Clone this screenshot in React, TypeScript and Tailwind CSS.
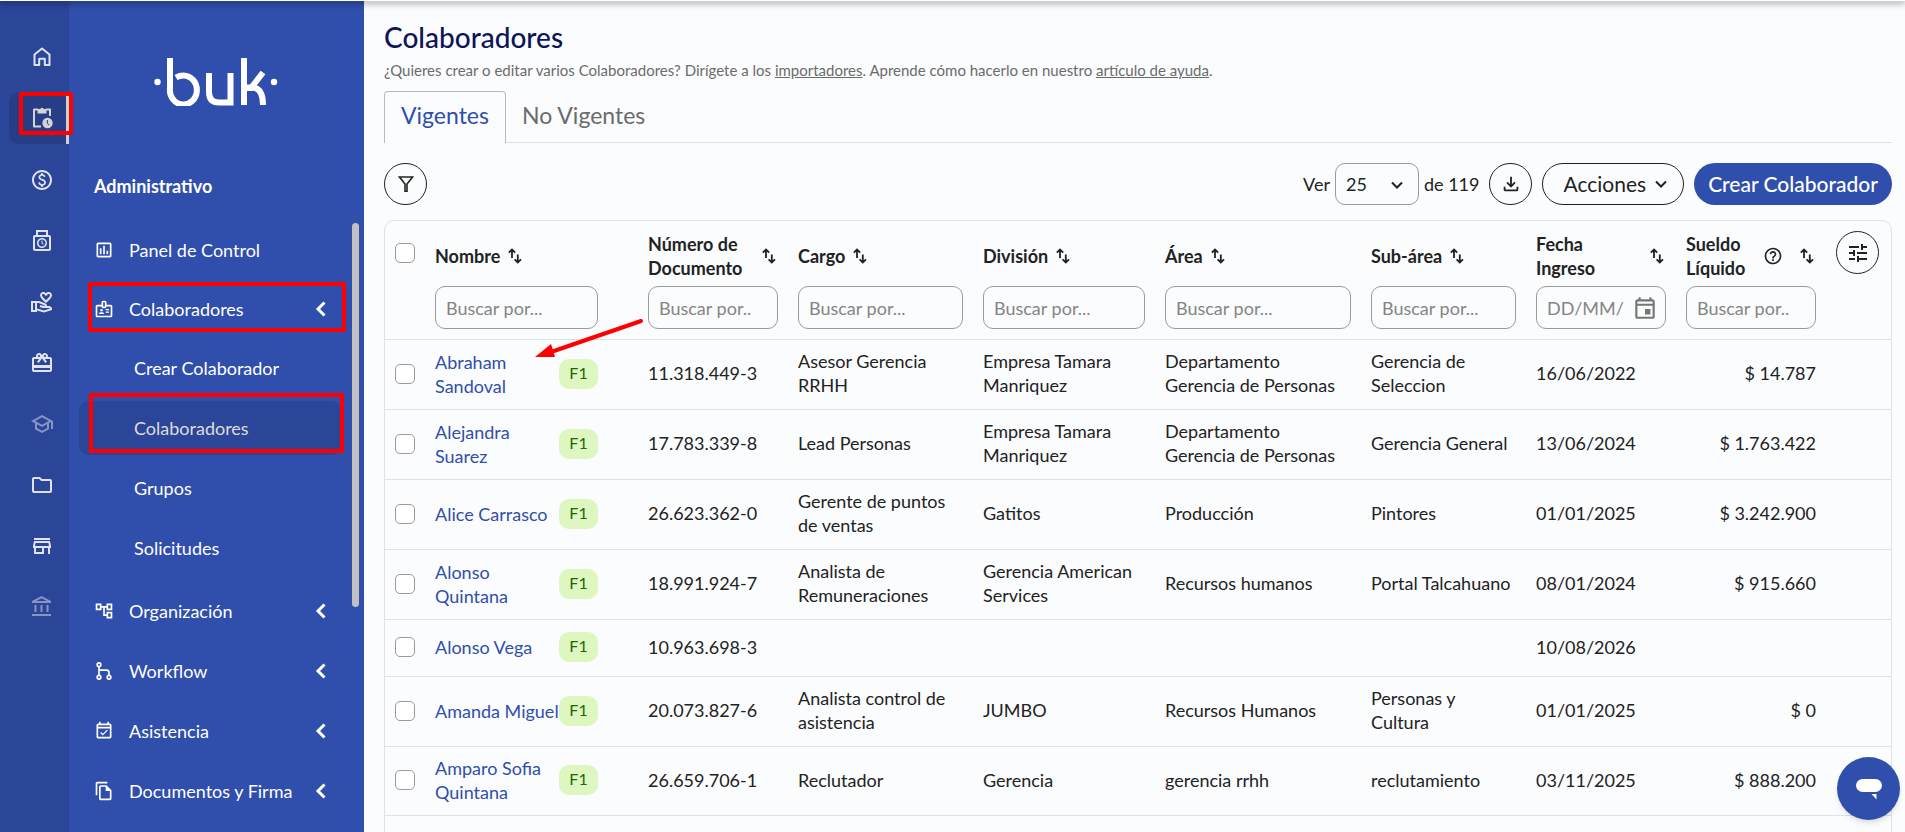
import type { ReactNode } from 'react';
import {
  MdOutlinePaid, MdOutlinePunchClock, MdOutlineVolunteerActivism, MdOutlineCardGiftcard,
  MdOutlineSchool, MdOutlineFolder, MdOutlineStore, MdOutlineAccountBalance, MdOutlineInsertChart,
  MdOutlineBadge, MdOutlineAccountTree, MdOutlineEventAvailable, MdOutlineFileCopy, MdOutlineEvent,
  MdOutlineFileDownload, MdOutlineHelpOutline, MdTune,
} from 'react-icons/md';

function HomeIcon({ className }: { className?: string }) {
  return (
    <svg viewBox="0 0 24 24" fill="none" stroke="currentColor" strokeWidth="2" strokeLinejoin="round" className={className}>
      <path d="M4.500 9.500 12 3.500l7.500 6v10.500h-4.700v-6.200H9.200V20H4.500z" />
    </svg>
  );
}

function PendingIcon({ className }: { className?: string }) {
  return (
    <svg viewBox="0 0 24 24" fill="none" stroke="currentColor" strokeWidth="2" strokeLinejoin="round" className={className}>
      <path d="M11 20.500H4v-17h4M16 3.500h4V10" />
      <path d="M7.500 3h2.800a1.800 1.800 0 0 1 3.400 0h2.800v4.500h-9z" fill="currentColor" stroke="none" />
      <circle cx="17.500" cy="17" r="5.200" fill="currentColor" stroke="none" />
      <path d="M17.300 14v3.200l1.900 1.900" stroke="#273d86" strokeWidth="1" />
    </svg>
  );
}

function MergeIcon({ className }: { className?: string }) {
  return (
    <svg viewBox="0 0 24 24" fill="none" stroke="currentColor" strokeWidth="2" className={className}>
      <circle cx="6" cy="4.500" r="2.200" />
      <circle cx="6" cy="19.500" r="2.200" />
      <circle cx="18" cy="19.500" r="2.200" />
      <path d="M6 7v10M6 11h9a3 3 0 0 1 3 3v3" />
    </svg>
  );
}

function SortIcon() {
  return (
    <svg viewBox="0 0 14 16" fill="none" stroke="currentColor" strokeWidth="1.800" className="h-4 w-[14px] shrink-0">
      <path d="M4 10V1.500M.8 4.700 4 1.500l3.200 3.200M9.800 6.500v8M6.600 11.300l3.200 3.200 3.200-3.200" />
    </svg>
  );
}

function FilterIcon() {
  return (
    <svg viewBox="0 0 16 16" fill="none" stroke="currentColor" strokeWidth="1.600" className="h-4 w-4">
      <path d="M1.500 1h13L9 8v7.500H7V8z" />
    </svg>
  );
}

function Chevron({ dir, className }: { dir: 'left' | 'down'; className?: string }) {
  return (
    <svg viewBox="0 0 12 16" fill="none" stroke="currentColor" className={className} strokeWidth={dir === 'left' ? 3 : 2}>
      <path d={dir === 'left' ? 'M9.500 1.500 3 8l6.500 6.500' : 'M1 5.500 6 10.500l5-5'} />
    </svg>
  );
}

function Logo() {
  return (
    <svg viewBox="0 0 124 48" className="h-12 w-[124px]" role="img" aria-label="buk" fill="none" stroke="white" strokeWidth="6">
      <circle cx="3.500" cy="24" r="3.200" fill="white" stroke="none" />
      <path d="M16 0v30a13.500 14.500 0 1 0 13.500-12.500q-4 0-7.500 2" />
      <path d="M55 15v19q0 10.500 10 10.500h11.500V15" />
      <path d="M90 0v47M92 30h5l12-15.500M92 29.500h7q10 1 10 17.500" />
      <circle cx="120" cy="24" r="3.200" fill="white" stroke="none" />
    </svg>
  );
}

const rail = [
  { label: 'Inicio',         icon: HomeIcon },
  { label: 'Administrativo', icon: PendingIcon, active: true },
  { label: 'Remuneraciones', icon: MdOutlinePaid },
  { label: 'Control',        icon: MdOutlinePunchClock },
  { label: 'Bienestar',      icon: MdOutlineVolunteerActivism },
  { label: 'Beneficios',     icon: MdOutlineCardGiftcard },
  { label: 'Capacitaciones', icon: MdOutlineSchool, dim: true },
  { label: 'Archivos',       icon: MdOutlineFolder },
  { label: 'Tienda',         icon: MdOutlineStore },
  { label: 'Finanzas',       icon: MdOutlineAccountBalance, dim: true },
];

const menuBottom = [
  { label: 'Organización',       icon: MdOutlineAccountTree },
  { label: 'Workflow',           icon: MergeIcon },
  { label: 'Asistencia',         icon: MdOutlineEventAvailable },
  { label: 'Documentos y Firma', icon: MdOutlineFileCopy },
];

const submenu = ['Crear Colaborador', 'Colaboradores', 'Grupos', 'Solicitudes'];

const columns = [
  { title: 'Nombre',              width: 'w-[213px]', pad: 'pr-[30px]' },
  { title: 'Número de Documento', width: 'w-[150px]', placeholder: 'Buscar por..', spread: true },
  { title: 'Cargo',               width: 'w-[185px]' },
  { title: 'División',            width: 'w-[182px]' },
  { title: 'Área',                width: 'w-[206px]' },
  { title: 'Sub-área',            width: 'w-[165px]' },
  { title: 'Fecha Ingreso',       width: 'w-[150px]', placeholder: 'DD/MM/', spread: true, date: true },
  { title: 'Sueldo Líquido',      width: 'w-[150px]', placeholder: 'Buscar por..', spread: true, help: true },
];

const rows = [
  { name: 'Abraham Sandoval',       doc: '11.318.449-3', cargo: 'Asesor Gerencia RRHH',          division: 'Empresa Tamara Manriquez',   area: 'Departamento Gerencia de Personas', sub: 'Gerencia de Seleccion', date: '16/06/2022', pay: '$ 14.787' },
  { name: 'Alejandra Suarez',       doc: '17.783.339-8', cargo: 'Lead Personas',                 division: 'Empresa Tamara Manriquez',   area: 'Departamento Gerencia de Personas', sub: 'Gerencia General',      date: '13/06/2024', pay: '$ 1.763.422' },
  { name: 'Alice Carrasco',         doc: '26.623.362-0', cargo: 'Gerente de puntos de ventas',   division: 'Gatitos',                    area: 'Producción',                        sub: 'Pintores',              date: '01/01/2025', pay: '$ 3.242.900' },
  { name: 'Alonso Quintana',        doc: '18.991.924-7', cargo: 'Analista de Remuneraciones',    division: 'Gerencia American Services', area: 'Recursos humanos',                  sub: 'Portal Talcahuano',     date: '08/01/2024', pay: '$ 915.660' },
  { name: 'Alonso Vega',            doc: '10.963.698-3', cargo: '',                              division: '',                           area: '',                                  sub: '',                      date: '10/08/2026', pay: '' },
  { name: 'Amanda Miguel',          doc: '20.073.827-6', cargo: 'Analista control de asistencia', division: 'JUMBO',                     area: 'Recursos Humanos',                  sub: 'Personas y Cultura',    date: '01/01/2025', pay: '$ 0' },
  { name: 'Amparo Sofia Quintana',  doc: '26.659.706-1', cargo: 'Reclutador',                    division: 'Gerencia',                   area: 'gerencia rrhh',                     sub: 'reclutamiento',         date: '03/11/2025', pay: '$ 888.200' },
];

function Checkbox({ label }: { label: string }) {
  return (
    <input
      type="checkbox"
      aria-label={label}
      className="block h-5 w-5 appearance-none rounded-[5px] border border-[#9a9a9a] bg-white checked:bg-[#304eab]"
    />
  );
}

function Cell({ children, className = '' }: { children?: ReactNode; className?: string }) {
  return <td className={`px-[10px] pt-[9px] pb-3 ${className}`}>{children}</td>;
}

function Sidebar() {
  return (
    <aside className="flex shrink-0 text-white">
      {/* Icon rail */}
      <nav aria-label="Módulos" className="flex w-[69px] flex-col gap-[9px] bg-[#2b4599] pt-[31px]">
        {rail.map(({ label, icon: Icon, active, dim }) => (
          <a
            key={label}
            href="#"
            aria-label={label}
            className={`relative ml-[9px] flex h-[52px] items-center justify-center ${active ? 'mb-px rounded-l-[10px] border-r-[3px] border-[#cfcfcf] bg-[#273d86] pl-[8px] text-[#d4d4d4]' : 'pl-[5px] text-[#dfe3ee]'} ${dim ? 'opacity-50' : ''}`}
          >
            <Icon className="h-6 w-6" />
            {active && <span className="absolute top-0 -right-[7px] left-[10px] h-[43px] rounded-[2px] border-4 border-[#ff0000]" />}
          </a>
        ))}
      </nav>

      {/* Module menu */}
      <div className="flex w-[295px] flex-col bg-[#304eab]">
        <div className="flex justify-center pt-[58px] pr-[2px]">
          <Logo />
        </div>
        <h2 className="mt-[68px] pl-[25px] text-lg leading-6 font-bold">Administrativo</h2>
        <div className="mt-[25px] flex pr-[5px]">
          <nav aria-label="Administrativo" className="flex-1 pr-[10px] pl-[10px] text-lg">
            <a href="#" className="flex h-[54px] items-center pl-[15px]">
              <MdOutlineInsertChart className="h-5 w-5" />
              <span className="pl-[15px]">Panel de Control</span>
            </a>
            <button className="relative mt-[5px] flex h-[54px] w-full items-center pl-[15px]">
              <MdOutlineBadge className="h-5 w-5" />
              <span className="pl-[15px]">Colaboradores</span>
              <Chevron dir="left" className="mr-[15px] ml-auto h-4 w-3" />
              <span className="absolute top-0 -right-[4px] left-[9px] h-[50px] rounded-[2px] border-4 border-[#ff0000]" />
            </button>
            <div className="mt-[5px] flex flex-col gap-[6px]">
              {submenu.map((item) => (
                <a
                  key={item}
                  href="#"
                  className={`relative flex h-[54px] items-center rounded-[10px] pl-[55px] ${item === 'Colaboradores' ? 'bg-[#2b4599] text-[#dcdcdc]' : ''}`}
                >
                  {item}
                  {item === 'Colaboradores' && <span className="absolute -top-2 -right-[2px] left-[10px] h-[60px] border-4 border-[#ff0000]" />}
                </a>
              ))}
            </div>
            <div className="mt-[9px] flex flex-col gap-[6px]">
              {menuBottom.map(({ label, icon: Icon }) => (
                <button key={label} className="flex h-[54px] items-center pl-[15px]">
                  <Icon className="h-5 w-5" />
                  <span className="pl-[15px]">{label}</span>
                  <Chevron dir="left" className="mr-[15px] ml-auto h-4 w-3" />
                </button>
              ))}
            </div>
          </nav>
          <div className="h-[384px] w-[7px] rounded-full bg-[#c1c1c1]" />
        </div>
      </div>
    </aside>
  );
}

function Toolbar() {
  return (
    <div className="mt-5 flex items-center gap-[10px] text-lg">
      <button aria-label="Filtrar" className="mr-auto flex h-[42px] w-[43px] items-center justify-center rounded-full border border-[#222]">
        <FilterIcon />
      </button>
      <div className="flex items-center gap-[5px]">
        <label htmlFor="per-page">Ver</label>
        <div className="relative">
          <select id="per-page" className="block h-[42px] w-[84px] appearance-none rounded-[10px] border border-[#9a9a9a] pl-[10px]">
            <option>25</option>
            <option>50</option>
          </select>
          <Chevron dir="down" className="pointer-events-none absolute top-[14px] right-4 h-4 w-3" />
        </div>
        <span>de 119</span>
      </div>
      <button aria-label="Descargar" className="flex h-[42px] w-[43px] items-center justify-center rounded-full border border-[#222]">
        <MdOutlineFileDownload className="h-[22px] w-[22px]" />
      </button>
      <button className="flex h-[42px] items-center gap-[9px] rounded-full border border-[#222] pr-4 pl-5 text-[21px]">
        Acciones
        <Chevron dir="down" className="h-4 w-3" />
      </button>
      <button className="h-[42px] rounded-full bg-[#304eab] px-[14px] text-[21px] font-medium text-white">Crear Colaborador</button>
    </div>
  );
}

function EmployeeTable() {
  return (
    <div className="mt-[15px] rounded-t-[10px] border border-[#dfe1e4]">
      <table className="w-full table-fixed text-lg leading-6">
        <thead>
          <tr className="border-b border-[#dfe1e4] align-top">
            <th className="w-10 pt-[22px] pl-[10px]">
              <Checkbox label="Seleccionar todos" />
            </th>
            {columns.map((col) => (
              <th key={col.title} className={`px-[10px] pt-[11px] pb-[10px] text-left font-bold ${col.width}`}>
                <div className={`flex h-12 items-center gap-2 ${col.spread ? 'justify-between pr-[2px]' : ''}`}>
                  <span className={col.spread ? 'w-min' : ''}>{col.title}</span>
                  {col.help && <MdOutlineHelpOutline className="h-5 w-5 shrink-0" />}
                  <SortIcon />
                </div>
                <div className={`relative mt-[6px] ${col.pad ?? ''}`}>
                  <input
                    aria-label={col.title}
                    placeholder={col.placeholder ?? 'Buscar por...'}
                    className="block h-[43px] w-full rounded-[10px] border border-[#9a9a9a] px-[10px] font-normal placeholder:text-[#858585]"
                  />
                  {col.date && <MdOutlineEvent className="absolute top-[9px] right-2 h-[26px] w-[26px] text-[#757575]" />}
                </div>
              </th>
            ))}
            <th className="w-[65px] pt-[10px] pl-[10px]">
              <button aria-label="Configurar columnas" className="flex h-[43px] w-[43px] items-center justify-center rounded-full border border-[#222]">
                <MdTune className="h-6 w-6" />
              </button>
            </th>
          </tr>
        </thead>
        <tbody>
          {rows.map((row) => (
            <tr key={row.doc} className="border-b border-[#dfe1e4]">
              <td className="pb-[2px] pl-[10px]">
                <Checkbox label={`Seleccionar ${row.name}`} />
              </td>
              <td className="pt-[9px] pb-[11px] pl-[10px]">
                <div className="flex items-center py-[3px]">
                  <a href="#" className="-my-[3px] w-[124px] text-[#304eab]">{row.name}</a>
                  <span className="h-[30px] w-[39px] rounded-[10px] bg-[#def7c0] text-center text-base leading-7 text-[#226600]">F1</span>
                </div>
              </td>
              <Cell>{row.doc}</Cell>
              <Cell>{row.cargo}</Cell>
              <Cell>{row.division}</Cell>
              <Cell>{row.area}</Cell>
              <Cell>{row.sub}</Cell>
              <Cell>{row.date}</Cell>
              <Cell className="text-right">{row.pay}</Cell>
              <td />
            </tr>
          ))}
          <tr>
            <td colSpan={10} className="h-14" />
          </tr>
        </tbody>
      </table>
    </div>
  );
}

export default function App() {
  return (
    <div className="relative flex h-screen overflow-hidden bg-[#fbfcfe] font-['Lato','Noto_Sans',sans-serif] text-[#222]">
      <div className="absolute inset-x-0 top-0 z-10 h-px bg-white shadow-[0_1px_6px_1px_rgba(0,0,0,0.5)]" />
      <Sidebar />

      <main className="min-w-0 flex-1 pr-[13px] pl-5">
        <h1 className="pt-[19px] text-[28px] leading-9 font-medium text-[#0d1459]">Colaboradores</h1>
        <p className="mt-[3px] text-[15px] leading-6 text-[#6b6b6b]">
          ¿Quieres crear o editar varios Colaboradores? Dirígete a los <a href="#" className="underline">importadores</a>. Aprende
          cómo hacerlo en nuestro <a href="#" className="underline">artículo de ayuda</a>.
        </p>

        {/* Tabs */}
        <div role="tablist" className="mt-[9px] flex border-b border-[#dfe1e4] text-[23px]">
          <button role="tab" aria-selected="true" className="-mb-px h-[52px] rounded-t-[4px] border border-b-0 border-[#b8babd] bg-[#fbfcfe] px-4 pb-1 text-[#304eab]">
            Vigentes
          </button>
          <button role="tab" aria-selected="false" className="h-[51px] px-4 pb-[2px] text-[#6b6b6b]">
            No Vigentes
          </button>
        </div>

        <Toolbar />
        <EmployeeTable />
      </main>

      {/* Pointer to the first name in the list */}
      <svg viewBox="0 0 110 42" className="absolute top-[318px] left-[535px] h-[42px] w-[110px]" fill="#ff0000">
        <path d="M106 3 16 34" stroke="#ff0000" strokeWidth="4" strokeLinecap="round" />
        <path d="m0 39 16-13 4 13z" />
      </svg>

      <button aria-label="Abrir chat" className="absolute right-[5px] bottom-3 flex h-[63px] w-[63px] items-center justify-center rounded-full bg-[#304eab] shadow-md">
        <svg viewBox="0 0 26 22" className="h-[22px] w-[26px]" fill="white">
          <rect y="1" width="26" height="13" rx="6.500" />
          <path d="M15.500 16h5v5.500z" />
        </svg>
      </button>
    </div>
  );
}
